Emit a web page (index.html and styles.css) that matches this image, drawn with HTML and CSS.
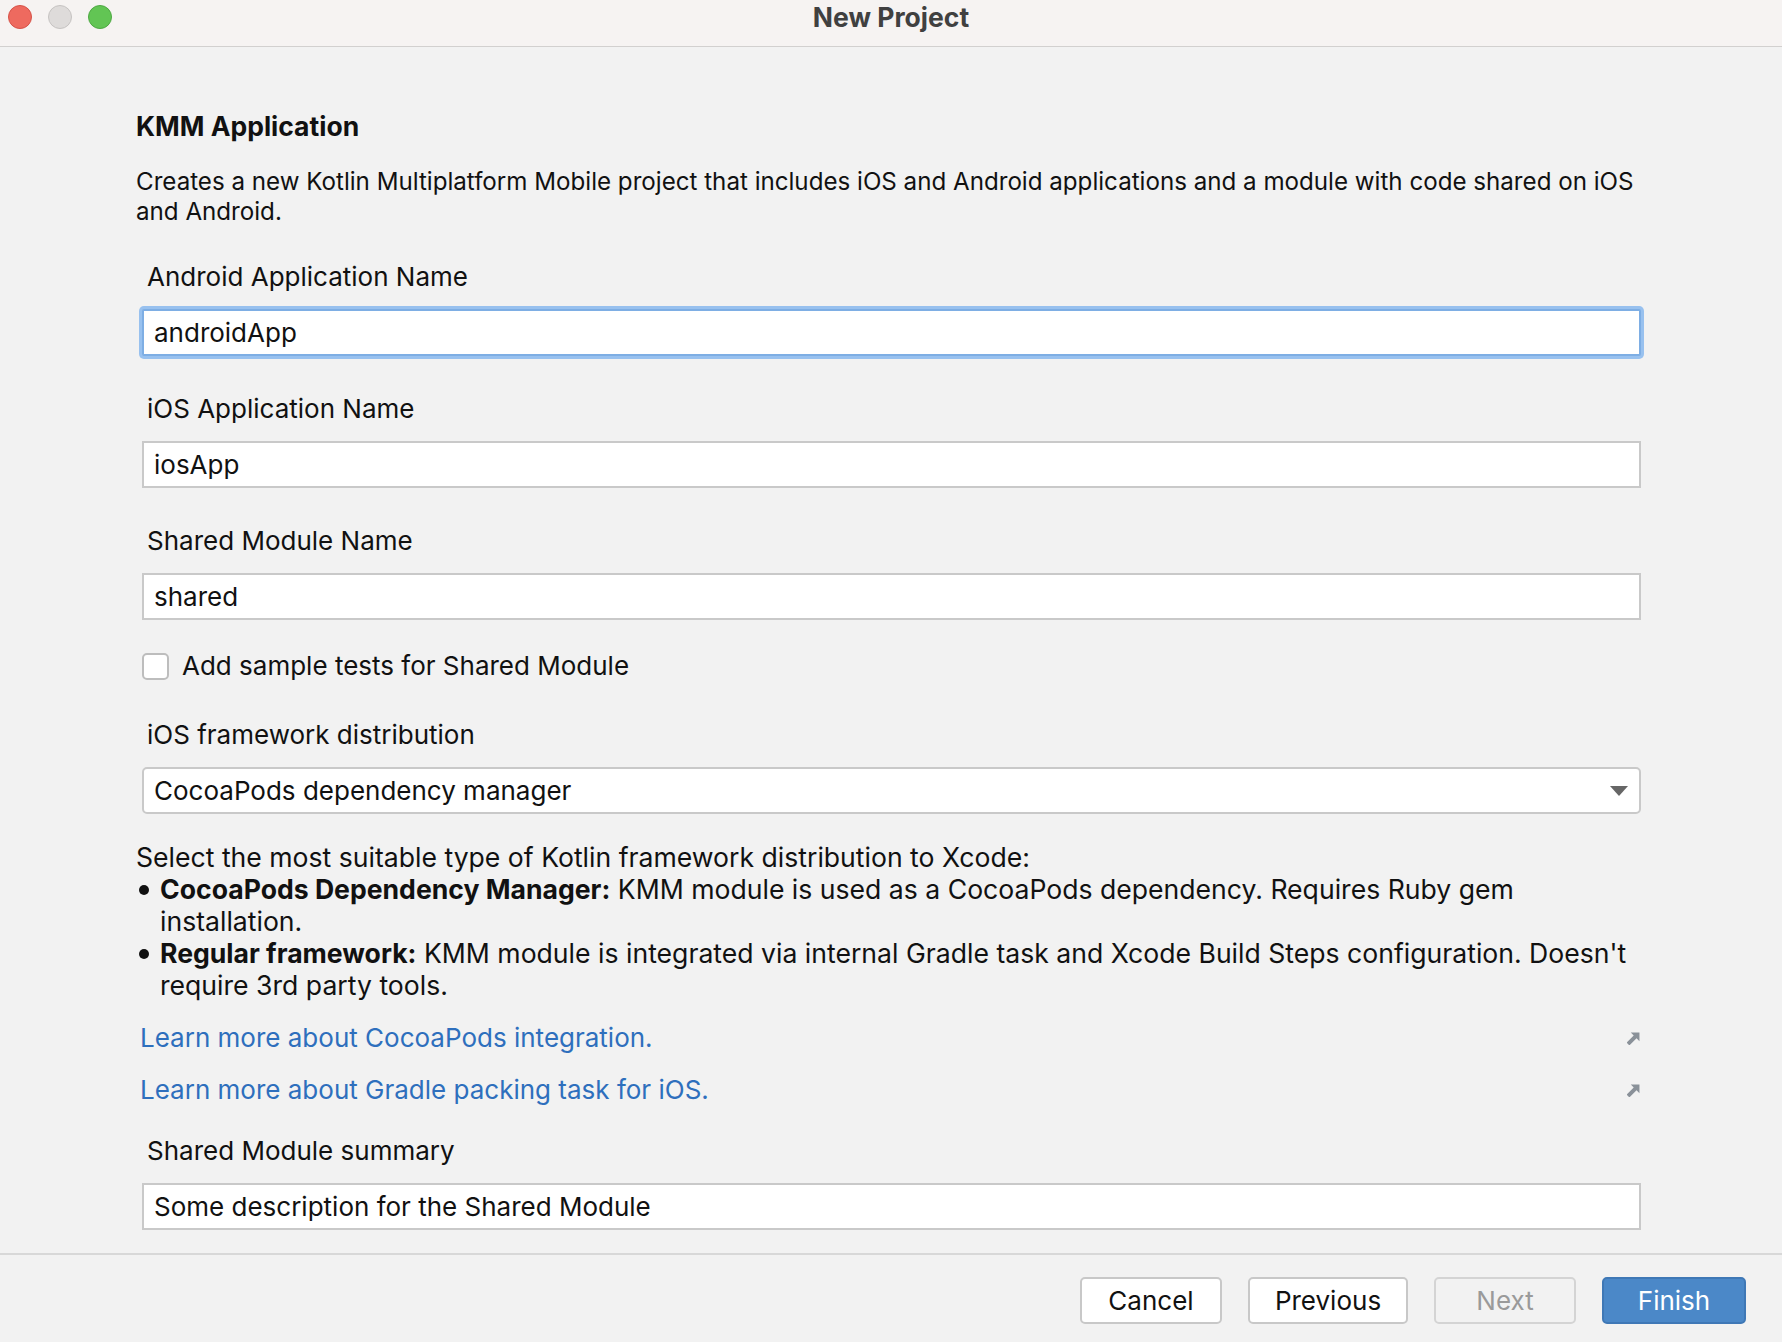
FILE: index.html
```html
<!DOCTYPE html>
<html lang="en">
<head>
<meta charset="utf-8">
<title>New Project</title>
<link rel="stylesheet" href="styles.css">
</head>
<body>
<div class="window">
  <header class="titlebar">
    <div class="lights">
      <span class="light red"></span>
      <span class="light gray"></span>
      <span class="light green"></span>
    </div>
    <div class="title">New Project</div>
    <div class="spacer"></div>
  </header>

  <main class="content">
    <h1 class="heading">KMM Application</h1>
    <p class="desc">Creates a new Kotlin Multiplatform Mobile project that includes iOS and Android applications and a module with code shared on iOS and Android.</p>

    <div class="field">
      <div class="label">Android Application Name</div>
      <div class="input focused">androidApp</div>
    </div>

    <div class="field">
      <div class="label">iOS Application Name</div>
      <div class="input">iosApp</div>
    </div>

    <div class="field">
      <div class="label">Shared Module Name</div>
      <div class="input">shared</div>
    </div>

    <div class="check-row">
      <span class="checkbox"></span>
      <span class="check-label">Add sample tests for Shared Module</span>
    </div>

    <div class="field field-select">
      <div class="label">iOS framework distribution</div>
      <div class="select">
        <span>CocoaPods dependency manager</span>
        <svg class="caret" width="18" height="10" viewBox="0 0 18 10"><path d="M0 0 H18 L9 10 Z" fill="#666666"/></svg>
      </div>
    </div>

    <div class="help">
      <p>Select the most suitable type of Kotlin framework distribution to Xcode:</p>
      <ul>
        <li><b>CocoaPods Dependency Manager:</b> KMM module is used as a CocoaPods dependency. Requires Ruby gem installation.</li>
        <li><b>Regular framework:</b> KMM module is integrated via internal Gradle task and Xcode Build Steps configuration. Doesn't require 3rd party tools.</li>
      </ul>
    </div>

    <div class="links">
      <div class="link-row">
        <a class="link" href="#">Learn more about CocoaPods integration.</a>
        <svg class="ext" width="13" height="13" viewBox="0 0 12 12"><path d="M3.5 0.5 H11.5 V8.5 L8.8 5.8 L2.2 12.4 L-0.4 9.8 L6.2 3.2 Z" fill="#8a9199"/></svg>
      </div>
      <div class="link-row">
        <a class="link" href="#">Learn more about Gradle packing task for iOS.</a>
        <svg class="ext" width="13" height="13" viewBox="0 0 12 12"><path d="M3.5 0.5 H11.5 V8.5 L8.8 5.8 L2.2 12.4 L-0.4 9.8 L6.2 3.2 Z" fill="#8a9199"/></svg>
      </div>
    </div>

    <div class="field">
      <div class="label">Shared Module summary</div>
      <div class="input">Some description for the Shared Module</div>
    </div>
  </main>

  <footer class="footer">
    <button class="btn">Cancel</button>
    <button class="btn btn-prev">Previous</button>
    <button class="btn btn-disabled">Next</button>
    <button class="btn btn-primary">Finish</button>
  </footer>
</div>
</body>
</html>
```

FILE: styles.css
```css
* { box-sizing: border-box; }

html, body {
  margin: 0;
  padding: 0;
  background: #f2f2f2;
}

body {
  font-family: Inter, "Liberation Sans", Arial, sans-serif;
  font-size: 26px;
  color: #111111;
}

.window {
  height: 100vh;
  display: flex;
  flex-direction: column;
}

/* Title bar */
.titlebar {
  height: 47px;
  flex: none;
  background: #f6f3f2;
  border-bottom: 1px solid #d2d0cf;
  display: grid;
  grid-template-columns: 1fr auto 1fr;
  align-items: center;
}

.lights {
  display: flex;
  gap: 16px;
  padding-left: 8px;
  align-self: start;
  padding-top: 5px;
}

.light {
  width: 24px;
  height: 24px;
  border-radius: 50%;
  display: block;
}
.light.red { background: #ee6a5f; border: 1px solid #d65248; }
.light.gray { background: #dedbda; border: 1px solid #c6c3c2; }
.light.green { background: #62c554; border: 1px solid #4ea843; }

.title {
  font-weight: 700;
  font-size: 26.5px;
  color: #404040;
  padding-bottom: 12px;
}

/* Content */
.content {
  flex: 1;
  padding: 64px 141px 0 136px;
}

.heading {
  margin: 0;
  font-size: 26.5px;
  font-weight: 700;
  line-height: 30px;
}

.desc {
  margin: 26px 0 0;
  font-size: 24.15px;
  line-height: 30px;
}

.field {
  margin-top: 35px;
}
.field + .field { margin-top: 38px; }

.label {
  line-height: 30px;
  padding-left: 11px;
}

.input, .select {
  margin: 17px 0 0 6px;
  height: 47px;
  background: #ffffff;
  border: 2px solid #c9c9c9;
  padding: 0 10px;
  display: flex;
  align-items: center;
  line-height: 30px;
}

.input.focused {
  border-color: #7eaee4;
  border-radius: 2px;
  box-shadow: 0 0 0 3px #98c1ef;
}

.check-row {
  margin-top: 31px;
  display: flex;
  align-items: center;
  gap: 13px;
  padding-left: 6px;
  line-height: 30px;
}

.checkbox {
  width: 27px;
  height: 27px;
  background: #ffffff;
  border: 2px solid #bdbdbd;
  border-radius: 5px;
  display: block;
}

.field-select { margin-top: 39px; }

.select {
  border-radius: 5px;
  justify-content: space-between;
  padding-right: 11px;
}

.help {
  margin-top: 27px;
  font-size: 26.6px;
  line-height: 32px;
}
.help p { margin: 0; }
.help ul {
  margin: 0;
  padding: 0;
  list-style: none;
}
.help li {
  position: relative;
  padding-left: 24px;
}
.help li::before {
  content: "";
  position: absolute;
  left: 3px;
  top: 12px;
  width: 10px;
  height: 10px;
  border-radius: 50%;
  background: #111111;
}
.help b { font-weight: 700; }

.links {
  margin-top: 21px;
  display: flex;
  flex-direction: column;
  gap: 20px;
}

.link-row {
  display: flex;
  align-items: center;
  justify-content: space-between;
  padding-left: 4px;
  padding-right: 1px;
  line-height: 32px;
}

.link {
  color: #2e6fbd;
  text-decoration: none;
}

.links + .field { margin-top: 30px; }

/* Footer */
.footer {
  flex: none;
  height: 89px;
  border-top: 2px solid #d8d8d8;
  display: flex;
  justify-content: flex-end;
  align-items: flex-start;
  gap: 26px;
  padding: 22px 36px 0 0;
}

.btn {
  font-family: inherit;
  font-size: 26px;
  height: 47px;
  width: 142px;
  background: #ffffff;
  color: #111111;
  border: 2px solid #c8c8c8;
  border-radius: 5px;
  padding: 0;
}
.btn-prev { width: 160px; }
.btn-disabled {
  background: #f2f2f2;
  color: #9a9a9a;
  border-color: #d4d4d4;
}
.btn-primary {
  width: 144px;
  background: #4b88c8;
  border-color: #3f78b6;
  color: #ffffff;
}
```
